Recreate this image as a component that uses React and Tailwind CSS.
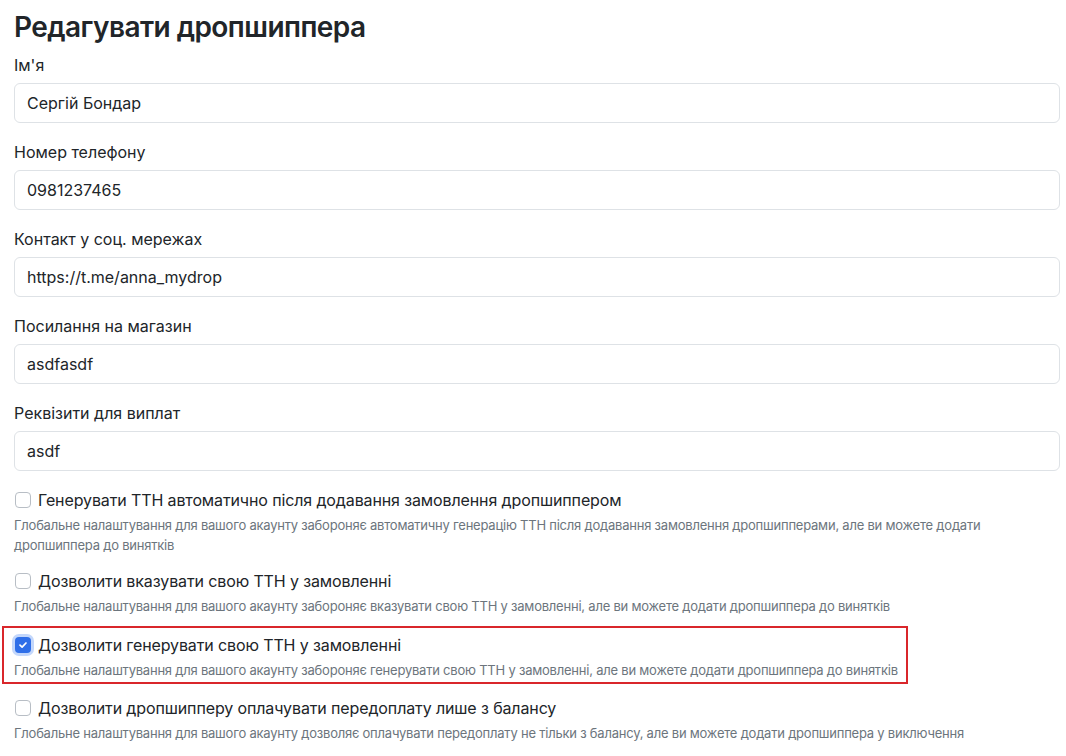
import React from "react";

const font = { fontFamily: "Inter, 'Noto Sans', sans-serif" };

function Field({ label, value }) {
  return (
    <div className="mb-[17px]">
      <div className="text-[16px] leading-[24px] text-[#212529] mb-[6px]">{label}</div>
      <div className="h-[40px] w-full rounded-[6px] border border-[#dee2e6] bg-white px-[12px] flex items-center text-[16px] text-[#212529]">
        {value}
      </div>
    </div>
  );
}

function Check({ checked }) {
  if (checked) {
    return (
      <span className="flex h-[16px] w-[16px] items-center justify-center rounded-[4px] bg-[#2f6fe8] ring-[3px] ring-[#c3d7fb]">
        <svg width="10" height="10" viewBox="0 0 10 10">
          <path d="M2 5.2 L4.1 7.2 L8 3" fill="none" stroke="white" strokeWidth="1.7" strokeLinecap="round" strokeLinejoin="round" />
        </svg>
      </span>
    );
  }
  return <span className="block h-[16px] w-[16px] rounded-[4px] border border-[#b8bec5] bg-white" />;
}

function CheckItem({ label, desc, checked, highlight, mb }) {
  return (
    <div className={"relative " + mb}>
      {highlight && (
        <div className="pointer-events-none absolute -left-[12px] -top-[7px] h-[58px] w-[906px] border-2 border-[#d9262b]" />
      )}
      <div className="flex items-center gap-[7px] pl-[1px] text-[16px] leading-[24px] tracking-[-0.12px] text-[#212529]">
        <Check checked={checked} />
        <span>{label}</span>
      </div>
      <div className="mt-[3px] text-[13px] leading-[20px] tracking-[-0.22px] text-[#6c757d]">{desc}</div>
    </div>
  );
}

export default function App() {
  return (
    <div className="min-h-[756px] w-[1066px] bg-white" style={font}>
      <div className="w-[1046px] ml-[14px] pt-[8px]">
        <h1 className="text-[28px] leading-[38px] font-semibold text-[#212529] mb-[7px] tracking-[-0.55px]">Редагувати дропшиппера</h1>
        <Field label="Ім'я" value="Сергій Бондар" />
        <Field label="Номер телефону" value="0981237465" />
        <Field label="Контакт у соц. мережах" value="https://t.me/anna_mydrop" />
        <Field label="Посилання на магазин" value="asdfasdf" />
        <Field label="Реквізити для виплат" value="asdf" />
        <CheckItem
          mb="mb-[14px]"
          label="Генерувати ТТН автоматично після додавання замовлення дропшиппером"
          desc={<>Глобальне налаштування для вашого акаунту забороняє автоматичну генерацію ТТН після додавання замовлення дропшипперами, але ви можете додати<br />дропшиппера до винятків</>}
        />
        <CheckItem
          mb="mb-[17px]"
          label="Дозволити вказувати свою ТТН у замовленні"
          desc="Глобальне налаштування для вашого акаунту забороняє вказувати свою ТТН у замовленні, але ви можете додати дропшиппера до винятків"
        />
        <CheckItem
          mb="mb-[16px]"
          checked
          highlight
          label="Дозволити генерувати свою ТТН у замовленні"
          desc="Глобальне налаштування для вашого акаунту забороняє генерувати свою ТТН у замовленні, але ви можете додати дропшиппера до винятків"
        />
        <CheckItem
          mb="mb-[16px]"
          label="Дозволити дропшипперу оплачувати передоплату лише з балансу"
          desc="Глобальне налаштування для вашого акаунту дозволяє оплачувати передоплату не тільки з балансу, але ви можете додати дропшиппера у виключення"
        />
      </div>
    </div>
  );
}
